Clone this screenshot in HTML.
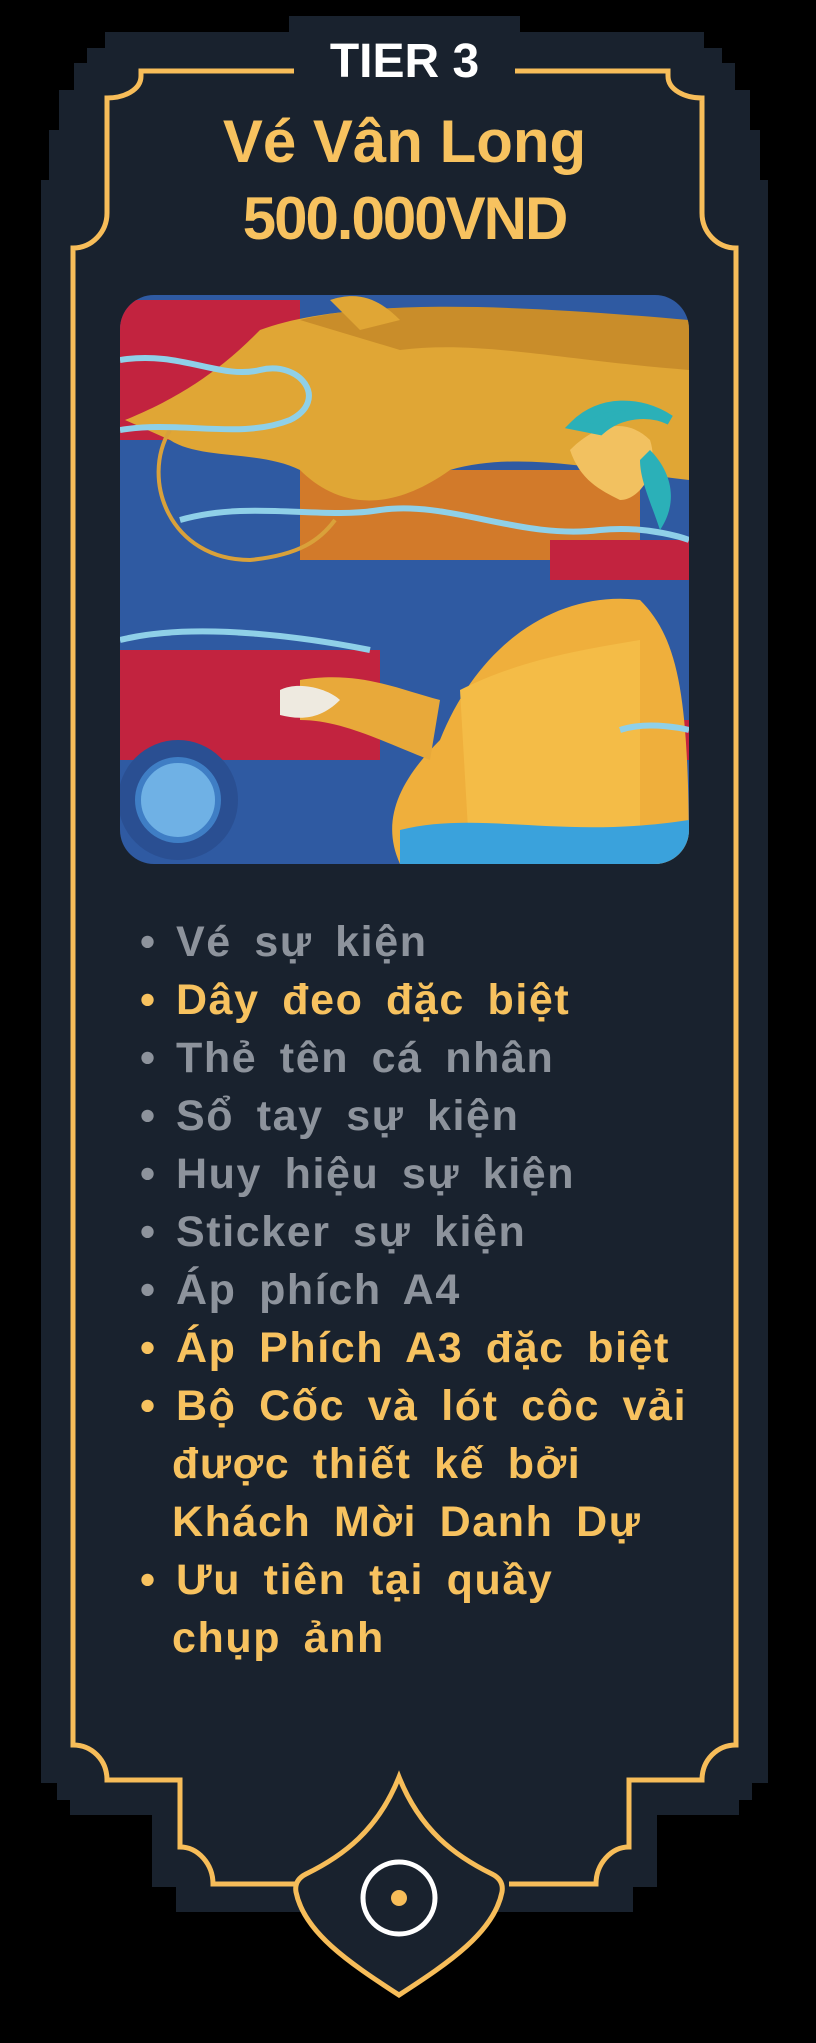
<!DOCTYPE html>
<html><head><meta charset="utf-8">
<style>
html,body{margin:0;padding:0;background:#000;}
body{width:816px;height:2043px;position:relative;overflow:hidden;font-family:"Liberation Sans",sans-serif;}
svg.frame{position:absolute;left:0;top:0;}
.t{position:absolute;left:0;width:809px;text-align:center;font-weight:bold;white-space:nowrap;}
.li{position:absolute;left:140px;font-weight:bold;font-size:43px;letter-spacing:1.6px;word-spacing:9px;white-space:nowrap;line-height:58px;}
.g{color:#8d939c;}
.y{color:#f7c25f;}
.b{display:inline-block;width:36px;}
</style></head><body>
<svg class="frame" width="816" height="2043" viewBox="0 0 816 2043">
  <path fill="#19222e" d="M289,16 H520 V32 H704 V48 H722 V63 H735 V90 H750 V130 H760 V180 H768 V1783 H752 V1800 H739 V1815 H657 V1887 H633 V1912 H300 H176 V1887 H152 V1815 H70 V1800 H57 V1783 H41 V180 H49 V130 H59 V90 H74 V63 H87 V48 H105 V32 H289 Z"/>
  <path fill="none" stroke="#f7bd59" stroke-width="5" d="M294,71 H141 V76 C141,90 124,98 107,98 V213 C107,232 92,248 73,248 V1745 C92,1745 107,1760 107,1780 H180 V1847 C198,1847 213,1864 213,1884 H300"/>
  <path fill="none" stroke="#f7bd59" stroke-width="5" d="M515,71 H668 V76 C668,90 685,98 702,98 V213 C702,232 717,248 736,248 V1745 C717,1745 702,1760 702,1780 H629 V1847 C611,1847 596,1864 596,1884 H509"/>
  <path fill="#19222e" stroke="#f7bd59" stroke-width="5" d="M399,1777 C420,1830 455,1856 492,1874 Q504,1880 502,1892 C494,1932 450,1962 399,1995 C348,1962 304,1932 296,1892 Q294,1880 306,1874 C343,1856 378,1830 399,1777 Z"/>
  <circle cx="399" cy="1898" r="36" fill="none" stroke="#fff" stroke-width="5"/>
  <circle cx="399" cy="1898" r="8" fill="#f7bd59"/>
  <defs><clipPath id="c"><rect x="120" y="295" width="569" height="569" rx="34"/></clipPath></defs>
  <g clip-path="url(#c)">
    <rect x="120" y="295" width="569" height="569" fill="#2f5aa2"/>
    <path d="M120,300 H300 V440 H120Z" fill="#c2233f"/>
    <path d="M120,650 H380 V760 H120Z" fill="#c2233f"/>
    <path d="M300,470 H640 V560 H300Z" fill="#d27a2a"/>
    <path d="M550,540 H689 V580 H550Z" fill="#c2233f"/>
    <path d="M640,720 H689 V760 H640Z" fill="#c2233f"/>
    <path d="M125,420 C200,390 240,350 260,330 C340,300 500,300 689,330 V480 C600,470 520,450 450,470 C380,520 330,500 300,470 C260,450 200,460 170,440 Z" fill="#e0a635"/>
    <path d="M300,320 C380,300 520,305 689,320 V370 C560,360 480,340 400,350 Z" fill="#c98d2a"/>
    <path d="M330,300 C360,290 380,300 400,320 L360,330 Z" fill="#e0a635"/>
    <path d="M170,430 C140,480 170,560 250,560 C300,555 320,540 335,520" fill="none" stroke="#d9a13a" stroke-width="4"/>
    <path d="M120,360 C180,350 220,380 260,370 C300,360 330,400 290,420 C240,440 180,420 120,430" fill="none" stroke="#8fd0e8" stroke-width="6"/>
    <path d="M180,520 C250,500 320,520 380,510 C450,500 520,540 600,530 C650,525 689,540 689,540" fill="none" stroke="#8fd0e8" stroke-width="6"/>
    <path d="M120,640 C200,620 320,640 370,650" fill="none" stroke="#8fd0e8" stroke-width="6"/>
    <path d="M440,740 C480,640 560,590 640,600 C680,640 689,700 689,864 H400 C380,820 400,780 440,740 Z" fill="#efaf3c"/>
    <path d="M460,690 C520,660 580,650 640,640 V864 H470 Z" fill="#f4bc47"/>
    <path d="M300,680 C360,670 400,690 440,700 L430,760 C380,740 340,720 300,720 Z" fill="#e8a93a"/>
    <path d="M280,690 C300,680 330,690 340,700 C320,720 300,720 280,715 Z" fill="#eeeae0"/>
    <path d="M570,450 C600,420 630,420 650,440 C660,470 640,500 620,500 C600,490 580,480 570,450Z" fill="#f2c160"/>
    <path d="M575,425 C600,400 640,400 670,420 C650,410 620,412 600,430 Z" fill="#2bb0b8" stroke="#2bb0b8" stroke-width="10"/>
    <path d="M650,450 C670,470 680,500 660,530 C650,500 640,480 640,460Z" fill="#2bb0b8"/>
    <circle cx="178" cy="800" r="60" fill="#2a4f92"/>
    <circle cx="178" cy="800" r="40" fill="#6fb1e5" stroke="#3f7ec5" stroke-width="6"/>
    <path d="M400,830 C480,810 560,840 689,820 V864 H400 Z" fill="#3aa2dc"/>
    <path d="M620,730 C650,720 689,730 689,730" fill="none" stroke="#8fd0e8" stroke-width="6"/>
  </g>
</svg>
<div class="t" style="top:34px;font-size:48px;color:#fff;">TIER 3</div>
<div class="t" style="top:107px;font-size:60px;color:#f7c25f;">Vé Vân Long</div>
<div class="t" style="top:184px;font-size:60px;color:#f7c25f;letter-spacing:-2px;">500.000VND</div>

<div class="li g" style="top:913px;"><span class="b">•</span>Vé sự kiện</div>
<div class="li y" style="top:971px;"><span class="b">•</span>Dây đeo đặc biệt</div>
<div class="li g" style="top:1029px;"><span class="b">•</span>Thẻ tên cá nhân</div>
<div class="li g" style="top:1087px;"><span class="b">•</span>Sổ tay sự kiện</div>
<div class="li g" style="top:1145px;"><span class="b">•</span>Huy hiệu sự kiện</div>
<div class="li g" style="top:1203px;"><span class="b">•</span>Sticker sự kiện</div>
<div class="li g" style="top:1261px;"><span class="b">•</span>Áp phích A4</div>
<div class="li y" style="top:1319px;"><span class="b">•</span>Áp Phích A3 đặc biệt</div>
<div class="li y" style="top:1377px;"><span class="b">•</span>Bộ Cốc và lót côc vải</div>
<div class="li y" style="top:1435px;left:172px;">được thiết kế bởi</div>
<div class="li y" style="top:1493px;left:172px;">Khách Mời Danh Dự</div>
<div class="li y" style="top:1551px;"><span class="b">•</span>Ưu tiên tại quầy</div>
<div class="li y" style="top:1609px;left:172px;">chụp ảnh</div>
</body></html>
